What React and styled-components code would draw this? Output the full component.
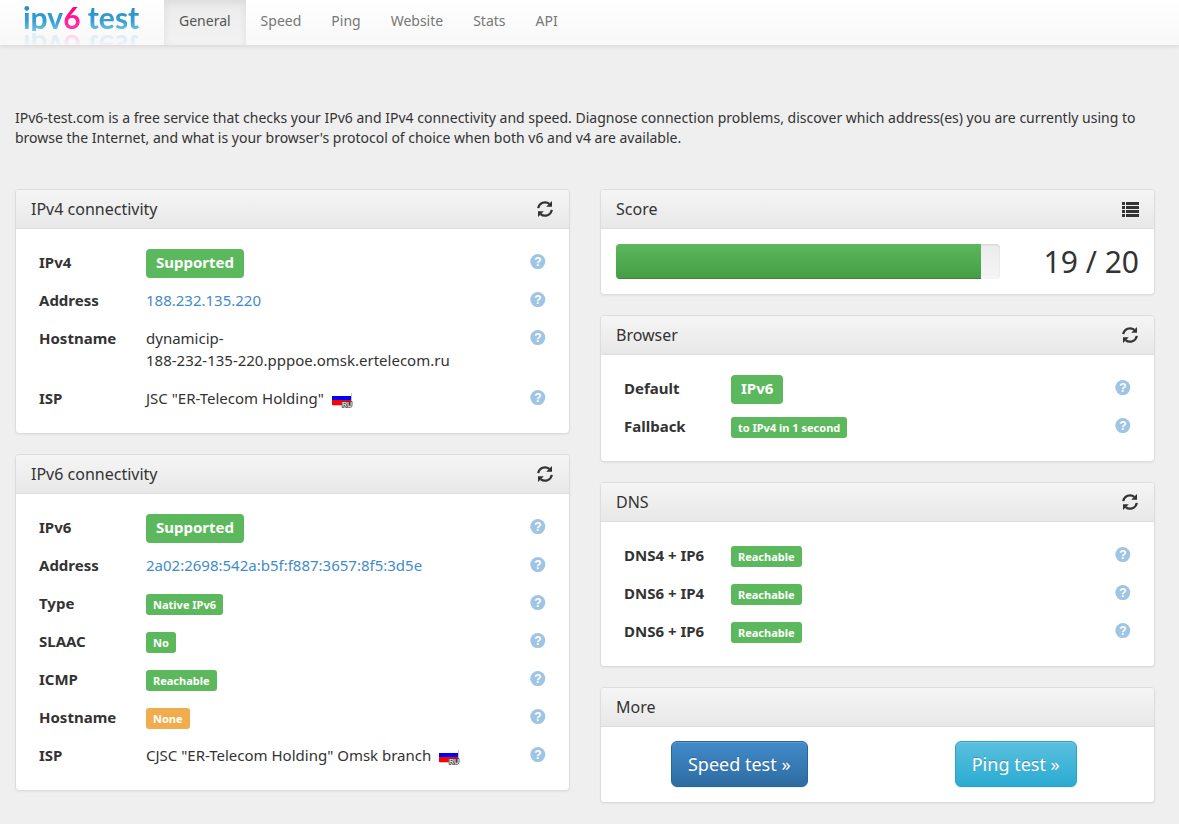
import React from "react";
import styled, { createGlobalStyle, css } from "styled-components";

const GlobalStyle = createGlobalStyle`
  *, *::before, *::after { box-sizing: border-box; }
  body {
    margin: 0;
    background: #efefef;
    color: #333;
    font-family: "Noto Sans", "Open Sans", sans-serif;
    font-size: 14px;
    line-height: 20px;
  }
`;

const Navbar = styled.nav`
  display: flex;
  height: 45px;
  padding-left: 24px;
  background: linear-gradient(to bottom, #fff 0%, #f8f8f8 100%);
  box-shadow: 0 1px 5px rgba(0, 0, 0, 0.12);
  overflow-x: clip;
`;

const Brand = styled.a`
  flex: none;
  width: 140px;
  height: 45px;
  overflow: hidden;
`;

const BrandArt = styled.svg`
  display: block;
  width: 120px;
  height: 40px;
  -webkit-box-reflect: below -16px linear-gradient(to bottom, transparent 40%, rgba(255, 255, 255, 0.22) 80%);
`;

const NavLink = styled.a`
  padding: 11px 15px 14px;
  color: ${(p) => (p.$active ? "#555" : "#777")};
  text-decoration: none;
  ${(p) =>
    p.$active &&
    css`
      background: linear-gradient(to bottom, #ebebeb 0%, #f3f3f3 100%);
      box-shadow: inset 0 3px 9px rgba(0, 0, 0, 0.075);
    `}
`;

const Main = styled.main`
  padding: 63px 24px 20px 15px;
`;

const Intro = styled.p`
  margin: 0 0 41px;
`;

const Columns = styled.div`
  display: grid;
  grid-template-columns: minmax(0, 1fr) minmax(0, 1fr);
  gap: 30px;
  align-items: start;
`;

const Column = styled.div`
  display: flex;
  flex-direction: column;
  gap: 20px;
`;

const PanelBox = styled.section`
  background: #fff;
  border: 1px solid #ddd;
  border-radius: 4px;
  box-shadow: 0 1px 2px rgba(0, 0, 0, 0.05);
  overflow: hidden;
`;

const PanelHeader = styled.header`
  display: flex;
  align-items: center;
  justify-content: space-between;
  height: 39px;
  padding: 0 15px;
  border-bottom: 1px solid #ddd;
  background: linear-gradient(to bottom, #f5f5f5 0%, #e8e8e8 100%);
`;

const PanelTitle = styled.h3`
  margin: 0;
  font-size: 16px;
  font-weight: 400;
  line-height: 20px;
`;

const IconButton = styled.button`
  display: flex;
  padding: 0;
  border: 0;
  background: none;
  color: #333;
  cursor: pointer;
`;

const PanelBody = styled.div`
  padding: 15px;
`;

const ScoreBody = styled(PanelBody)`
  display: flex;
  align-items: center;
  gap: 30px;
`;

const ActionsBody = styled.div`
  display: grid;
  grid-template-columns: 1fr 1fr;
  justify-items: center;
  padding: 14px 0 15px;
`;

const Facts = styled.table`
  width: 100%;
  border-collapse: collapse;
  table-layout: fixed;
  font-size: 15px;
  line-height: 22px;
`;

const FactName = styled.th`
  width: 107px;
  padding: 7px 8px 9px;
  text-align: left;
  vertical-align: top;
  white-space: nowrap;
`;

const FactValue = styled.td`
  padding: 7px 8px 9px;
  vertical-align: top;
`;

const FactHelp = styled.td`
  width: 32px;
  padding: 10px 8px;
  vertical-align: top;
`;

const HelpButton = styled(IconButton)`
  color: #a0c5e4;
`;

const ValueLink = styled.a`
  color: #428bca;
  text-decoration: none;
`;

const Unbroken = styled.span`
  white-space: nowrap;
`;

const Line = styled.div`
  display: flex;
  align-items: center;
  height: 22px;
  margin: 1px 0 -1px;
`;

const badgeTones = { success: "#5cb85c", warning: "#f0ad4e" };

const Badge = styled.span`
  flex: none;
  padding: ${(p) => (p.$large ? "2px 10px 5px" : "3px 7px 2px")};
  border-radius: ${(p) => (p.$large ? "4px" : "3px")};
  background: ${(p) => badgeTones[p.$tone]};
  color: #fff;
  font-size: ${(p) => (p.$large ? "15px" : "11px")};
  font-weight: 700;
  line-height: ${(p) => (p.$large ? "22px" : "16px")};
  white-space: nowrap;
`;

const FlagArt = styled.svg`
  margin-left: 8px;
  vertical-align: -4px;
`;

const Progress = styled.div`
  flex: 1;
  height: 35px;
  border-radius: 4px;
  background: linear-gradient(to bottom, #ebebeb 0%, #f5f5f5 100%);
  box-shadow: inset 0 1px 2px rgba(0, 0, 0, 0.1);
  overflow: hidden;
`;

const ProgressFill = styled.div`
  height: 100%;
  background: linear-gradient(to bottom, #5cb85c 0%, #449d44 100%);
  box-shadow: inset 0 -1px 0 rgba(0, 0, 0, 0.15);
`;

const ScoreText = styled.div`
  flex: 0 0 109px;
  font-size: 30px;
  line-height: 35px;
  text-align: right;
  white-space: nowrap;
`;

const buttonTones = {
  primary: { from: "#428bca", to: "#2d6ca2", edge: "#2b669a" },
  info: { from: "#5bc0de", to: "#2aabd2", edge: "#28a4c9" },
};

const ActionButton = styled.button`
  padding: 10px 16px;
  border: 1px solid ${(p) => buttonTones[p.$tone].edge};
  border-radius: 6px;
  background: linear-gradient(
    to bottom,
    ${(p) => buttonTones[p.$tone].from} 0%,
    ${(p) => buttonTones[p.$tone].to} 100%
  );
  box-shadow: inset 0 1px 0 rgba(255, 255, 255, 0.15), 0 1px 1px rgba(0, 0, 0, 0.075);
  color: #fff;
  font-family: inherit;
  font-size: 18px;
  line-height: 24px;
  text-shadow: 0 -1px 0 rgba(0, 0, 0, 0.2);
  cursor: pointer;
`;

function Logo() {
  return (
    <BrandArt viewBox="0 0 120 40" role="img" aria-label="ipv6 test">
      <defs>
        <linearGradient id="logoBlue" x1="0" y1="8" x2="0" y2="30" gradientUnits="userSpaceOnUse">
          <stop offset="0" stopColor="#2790ca" />
          <stop offset="0.6" stopColor="#369fd3" />
          <stop offset="1" stopColor="#6cbfe4" />
        </linearGradient>
        <linearGradient id="logoPink" x1="0" y1="8" x2="0" y2="30" gradientUnits="userSpaceOnUse">
          <stop offset="0" stopColor="#ff0084" />
          <stop offset="1" stopColor="#ff38ac" />
        </linearGradient>
        <clipPath id="logoBase">
          <rect x="0" y="0" width="120" height="31" />
        </clipPath>
      </defs>
      <g clipPath="url(#logoBase)">
        <text x="-1" y="29" fontFamily="Lato, sans-serif" fontWeight="700" fontSize="30" fill="url(#logoBlue)">
          ipv<tspan fill="url(#logoPink)">6</tspan> test
        </text>
      </g>
    </BrandArt>
  );
}

function RefreshIcon() {
  return (
    <svg width="17" height="16" viewBox="0 0 17 16" aria-hidden="true">
      <g fill="none" stroke="currentColor" strokeWidth="2.2">
        <path d="M1.2 7.2A6.9 6.9 0 0 1 12.4 2.9" />
        <path d="M14.8 8.8A6.9 6.9 0 0 1 3.6 13.1" />
      </g>
      <path d="M15 0V5.7H9.2ZM1 16V10.3H6.8Z" fill="currentColor" />
    </svg>
  );
}

function ListIcon() {
  return (
    <svg width="17" height="15" viewBox="0 0 17 15" aria-hidden="true" fill="currentColor">
      {[0, 4, 8, 12].map((y) => (
        <path key={y} d={`M0 ${y}h3v3h-3zM4 ${y}h13v3h-13z`} />
      ))}
    </svg>
  );
}

function HelpIcon() {
  return (
    <svg width="16" height="16" viewBox="0 0 16 16" aria-hidden="true">
      <circle cx="7.8" cy="7.6" r="7.5" fill="currentColor" />
      <text
        x="7.8"
        y="12"
        fontFamily="Liberation Sans, sans-serif"
        fontSize="12"
        fontWeight="700"
        textAnchor="middle"
        fill="#fff"
      >
        ?
      </text>
    </svg>
  );
}

function RussianFlag() {
  return (
    <FlagArt width="21" height="16" viewBox="0 0 21 16" role="img" aria-label="Russia">
      <rect x="1" y="1" width="19" height="13" fill="#c4c4c4" />
      <rect x="0" y="0" width="19" height="4" fill="#fff" />
      <rect x="0" y="4" width="19" height="4" fill="#00f" />
      <rect x="0" y="8" width="19" height="5" fill="#f00" />
      <text
        x="10"
        y="15"
        fontFamily="Liberation Sans, sans-serif"
        fontSize="7"
        fontWeight="700"
        fill="#ddd"
        stroke="#444"
        strokeWidth="1.4"
        paintOrder="stroke"
      >
        RU
      </text>
    </FlagArt>
  );
}

function Panel({ title, action, children }) {
  return (
    <PanelBox>
      <PanelHeader>
        <PanelTitle>{title}</PanelTitle>
        {action === "refresh" && (
          <IconButton type="button" aria-label={`Refresh ${title}`}>
            <RefreshIcon />
          </IconButton>
        )}
        {action === "list" && (
          <IconButton type="button" aria-label={`${title} details`}>
            <ListIcon />
          </IconButton>
        )}
      </PanelHeader>
      {children}
    </PanelBox>
  );
}

function FactTable({ rows }) {
  return (
    <PanelBody>
      <Facts>
        <tbody>
          {rows.map(([name, value]) => (
            <tr key={name}>
              <FactName scope="row">{name}</FactName>
              <FactValue>{value}</FactValue>
              <FactHelp>
                <HelpButton type="button" aria-label={`Help: ${name}`}>
                  <HelpIcon />
                </HelpButton>
              </FactHelp>
            </tr>
          ))}
        </tbody>
      </Facts>
    </PanelBody>
  );
}

function Status({ large, tone = "success", children }) {
  return (
    <Line>
      <Badge $large={large} $tone={tone}>
        {children}
      </Badge>
    </Line>
  );
}

const ipv4Rows = [
  ["IPv4", <Status large>Supported</Status>],
  ["Address", <ValueLink href="#ipv4">188.232.135.220</ValueLink>],
  [
    "Hostname",
    <>
      dynamicip-
      <wbr />
      <Unbroken>188-232-135-220.pppoe.omsk.ertelecom.ru</Unbroken>
    </>,
  ],
  ["ISP", <>JSC "ER-Telecom Holding"<RussianFlag /></>],
];

const ipv6Rows = [
  ["IPv6", <Status large>Supported</Status>],
  ["Address", <ValueLink href="#ipv6">2a02:2698:542a:b5f:f887:3657:8f5:3d5e</ValueLink>],
  ["Type", <Status>Native IPv6</Status>],
  ["SLAAC", <Status>No</Status>],
  ["ICMP", <Status>Reachable</Status>],
  ["Hostname", <Status tone="warning">None</Status>],
  ["ISP", <>CJSC "ER-Telecom Holding" Omsk branch<RussianFlag /></>],
];

const browserRows = [
  ["Default", <Status large>IPv6</Status>],
  ["Fallback", <Status>to IPv4 in 1 second</Status>],
];

const dnsRows = [
  ["DNS4 + IP6", <Status>Reachable</Status>],
  ["DNS6 + IP4", <Status>Reachable</Status>],
  ["DNS6 + IP6", <Status>Reachable</Status>],
];

const score = 19;
const maxScore = 20;

export default function App() {
  return (
    <>
      <GlobalStyle />
      <Navbar>
        <Brand href="#home">
          <Logo />
        </Brand>
        {["General", "Speed", "Ping", "Website", "Stats", "API"].map((label, i) => (
          <NavLink key={label} href={`#${label.toLowerCase()}`} $active={i === 0}>
            {label}
          </NavLink>
        ))}
      </Navbar>
      <Main>
        <Intro>
          IPv6-test.com is a free service that checks your IPv6 and IPv4 connectivity and speed. Diagnose
          connection problems, discover which address(es) you are currently using to browse the Internet, and
          what is your browser's protocol of choice when both v6 and v4 are available.
        </Intro>
        <Columns>
          <Column>
            <Panel title="IPv4 connectivity" action="refresh">
              <FactTable rows={ipv4Rows} />
            </Panel>
            <Panel title="IPv6 connectivity" action="refresh">
              <FactTable rows={ipv6Rows} />
            </Panel>
          </Column>
          <Column>
            <Panel title="Score" action="list">
              <ScoreBody>
                <Progress
                  role="progressbar"
                  aria-label="Score"
                  aria-valuenow={score}
                  aria-valuemin={0}
                  aria-valuemax={maxScore}
                >
                  <ProgressFill style={{ width: `${(score / maxScore) * 100}%` }} />
                </Progress>
                <ScoreText>
                  {score} / {maxScore}
                </ScoreText>
              </ScoreBody>
            </Panel>
            <Panel title="Browser" action="refresh">
              <FactTable rows={browserRows} />
            </Panel>
            <Panel title="DNS" action="refresh">
              <FactTable rows={dnsRows} />
            </Panel>
            <Panel title="More">
              <ActionsBody>
                <ActionButton type="button" $tone="primary">
                  Speed test »
                </ActionButton>
                <ActionButton type="button" $tone="info">
                  Ping test »
                </ActionButton>
              </ActionsBody>
            </Panel>
          </Column>
        </Columns>
      </Main>
    </>
  );
}
